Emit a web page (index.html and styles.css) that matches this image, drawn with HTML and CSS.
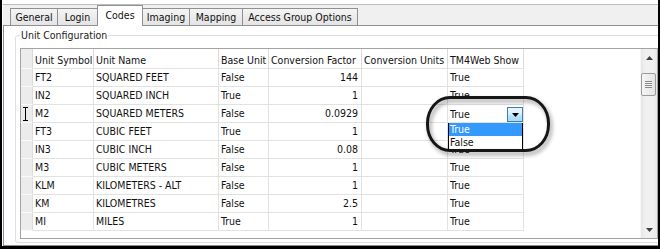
FILE: index.html
```html
<!DOCTYPE html>
<html>
<head>
<meta charset="utf-8">
<title>Codes - Unit Configuration</title>
<link rel="stylesheet" href="styles.css">
</head>
<body>
<div class="frame">
  <div class="tabctl">
    <div class="strip">
      <div class="tab t-general">General</div>
      <div class="tab t-login">Login</div>
      <div class="tab t-codes active">Codes</div>
      <div class="tab t-imaging">Imaging</div>
      <div class="tab t-mapping">Mapping</div>
      <div class="tab t-access">Access Group Options</div>
    </div>
    <div class="page">
      <fieldset class="group">
        <legend>Unit Configuration</legend>
        <div class="grid">
          <div class="table">
            <div class="row head">
              <div class="c rh"></div>
              <div class="c">Unit Symbol</div>
              <div class="c">Unit Name</div>
              <div class="c">Base Unit</div>
              <div class="c">Conversion Factor</div>
              <div class="c">Conversion Units</div>
              <div class="c">TM4Web Show</div>
            </div>
            <div class="row">
              <div class="c rh"></div><div class="c">FT2</div><div class="c">SQUARED FEET</div><div class="c">False</div><div class="c num">144</div><div class="c"></div><div class="c">True</div>
            </div>
            <div class="row">
              <div class="c rh"></div><div class="c">IN2</div><div class="c">SQUARED INCH</div><div class="c">True</div><div class="c num">1</div><div class="c"></div><div class="c">True</div>
            </div>
            <div class="row">
              <div class="c rh cur-cell">
                <svg class="ibeam" width="5" height="14" viewBox="0 0 5 14"><path d="M0 0.5H5M2.5 0V14M0 13.5H5" stroke="#000" stroke-width="1" fill="none" shape-rendering="crispEdges"/></svg>
              </div><div class="c">M2</div><div class="c">SQUARED METERS</div><div class="c">False</div><div class="c num">0.0929</div><div class="c"></div>
              <div class="c combo">
                <span class="combo-text">True</span>
                <span class="combo-btn"><svg width="7" height="4" viewBox="0 0 7 4"><polygon points="0,0 7,0 3.5,4" fill="#000"/></svg></span>
                <div class="droplist">
                  <div class="opt sel">True</div>
                  <div class="opt">False</div>
                </div>
              </div>
            </div>
            <div class="row">
              <div class="c rh"></div><div class="c">FT3</div><div class="c">CUBIC FEET</div><div class="c">True</div><div class="c num">1</div><div class="c"></div><div class="c">True</div>
            </div>
            <div class="row">
              <div class="c rh"></div><div class="c">IN3</div><div class="c">CUBIC INCH</div><div class="c">False</div><div class="c num">0.08</div><div class="c"></div><div class="c">True</div>
            </div>
            <div class="row">
              <div class="c rh"></div><div class="c">M3</div><div class="c">CUBIC METERS</div><div class="c">False</div><div class="c num">1</div><div class="c"></div><div class="c">True</div>
            </div>
            <div class="row">
              <div class="c rh"></div><div class="c">KLM</div><div class="c">KILOMETERS - ALT</div><div class="c">False</div><div class="c num">1</div><div class="c"></div><div class="c">True</div>
            </div>
            <div class="row">
              <div class="c rh"></div><div class="c">KM</div><div class="c">KILOMETRES</div><div class="c">False</div><div class="c num">2.5</div><div class="c"></div><div class="c">True</div>
            </div>
            <div class="row">
              <div class="c rh"></div><div class="c">MI</div><div class="c">MILES</div><div class="c">True</div><div class="c num">1</div><div class="c"></div><div class="c">True</div>
            </div>
            <div class="callout"></div>
          </div>
          <div class="vscroll">
            <div class="sb-btn"><svg width="7" height="4" viewBox="0 0 7 4"><polygon points="0,4 7,4 3.5,0" fill="#404040"/></svg></div>
            <div class="sb-track">
              <div class="thumb"><div class="grip"></div></div>
            </div>
            <div class="sb-btn"><svg width="7" height="4" viewBox="0 0 7 4"><polygon points="0,0 7,0 3.5,4" fill="#404040"/></svg></div>
          </div>
        </div>
      </fieldset>
    </div>
  </div>
</div>
</body>
</html>
```

FILE: styles.css
```css
* { box-sizing: border-box; }
html, body { margin: 0; padding: 0; }
body {
  width: 660px;
  height: 249px;
  overflow: hidden;
  background: #fff;
  font-family: "DejaVu Sans Condensed", "DejaVu Sans", sans-serif;
  font-stretch: condensed;
  font-size: 10.5px;
  color: #111;
}
.frame {
  width: 660px;
  height: 249px;
  border-left: 2px solid #000;
  border-right: 2px solid #000;
  border-bottom: 3px solid #000;
  overflow: hidden;
  background: #fff;
}
.tabctl {
  margin: 0 -17px 0 1px;
  padding-top: 4px;
}
.strip {
  height: 22px;
  border-top: 1px solid #bdbdbd;
  border-bottom: 1px solid #8e9096;
  background: #f0f0f0;
  display: flex;
  align-items: flex-end;
  padding-left: 7px;
}
.tab {
  height: 17px;
  border: 1px solid #8e9096;
  border-bottom: none;
  background: linear-gradient(#f4f4f4, #e4e4e4);
  text-align: center;
  line-height: 16px;
  white-space: nowrap;
  margin-left: -1px;
}
.tab:first-child { margin-left: 0; }
.tab.active {
  height: 21px;
  margin-bottom: -1px;
  background: #fff;
  line-height: 18px;
  position: relative;
}
.t-general { width: 48px; }
.t-login { width: 41px; }
.t-codes { width: 46px; }
.t-imaging { width: 48px; }
.t-mapping { width: 54px; }
.t-access { width: 116px; }

.page {
  border: 1px solid #8e9096;
  border-top: none;
  padding: 3px 11px 2px 11px;
  background: #fff;
}
.group {
  margin: 0;
  border: 1px solid #d9dfe3;
  border-radius: 3px;
  padding: 6px 4px 3px 4px;
}
.group legend {
  padding: 0 1px;
  line-height: 13px;
  color: #1b1b1b;
}
.grid {
  display: flex;
  height: 191px;
  border: 1px solid #a3a3a3;
  background: #fff;
}
.table {
  flex: 1;
  position: relative;
}
.row {
  display: grid;
  grid-template-columns: 12px 61px 125px 50px 93px 86px 76px;
  height: 18px;
}
.row.head { height: 20px; }
.c {
  border-right: 1px solid #e2e2e2;
  border-bottom: 1px solid #e2e2e2;
  padding: 0 2px;
  line-height: 17px;
  white-space: nowrap;
  overflow: hidden;
}
.row.head .c {
  line-height: 16px;
  padding-top: 3px;
  border-right-color: #d9d9d9;
}
.c.rh {
  background: #ececec;
  border-bottom-color: #fafafa;
  border-right-color: #dcdcdc;
  padding: 0;
}
.c.num { text-align: right; padding-right: 3px; }
.cur-cell { position: relative; overflow: visible; }
.ibeam {
  position: absolute;
  left: 2px;
  top: 2px;
}
.c.combo {
  position: relative;
  overflow: visible;
  display: flex;
  align-items: flex-end;
  justify-content: space-between;
  padding-right: 0;
}
.combo-text { line-height: 15px; }
.combo-btn {
  width: 16px;
  height: 15px;
  border: 1px solid #3c7fb1;
  background: linear-gradient(#eaf6fd, #d9f0fc 48%, #bee6fd 52%, #a7d9f5);
  display: flex;
  align-items: center;
  justify-content: center;
}
.droplist {
  position: absolute;
  left: 0;
  top: 18px;
  width: 75px;
  border: 1px solid #000;
  border-top: none;
  background: #fff;
  z-index: 2;
}
.opt {
  line-height: 13px;
  padding-left: 1px;
}
.opt.sel { background: #3399ff; color: #fff; }
.callout {
  position: absolute;
  left: 405px;
  top: 47px;
  width: 124px;
  height: 56px;
  border: 3px solid #161616;
  border-radius: 24px / 27px;
  filter: drop-shadow(2px 3px 2px rgba(0,0,0,0.4));
  z-index: 3;
}
.vscroll {
  width: 17px;
  display: flex;
  flex-direction: column;
  background: linear-gradient(to right, #e6e6e6, #f0f0f0 25%, #f0f0f0 75%, #e8e8e8);
  border-left: 1px solid #f7f7f7;
}
.sb-btn {
  height: 17px;
  display: flex;
  align-items: center;
  justify-content: center;
}
.sb-track { flex: 1; }
.thumb {
  margin: 7px 1px 0 0;
  height: 23px;
  border: 1px solid #9a9a9a;
  border-radius: 2px;
  background: linear-gradient(to right, #f6f6f6, #e4e4e4);
  display: flex;
  align-items: center;
  justify-content: center;
}
.grip {
  width: 7px;
  height: 7px;
  background: repeating-linear-gradient(#8a8a8a 0 1px, #f4f4f4 1px 2px);
}
```
